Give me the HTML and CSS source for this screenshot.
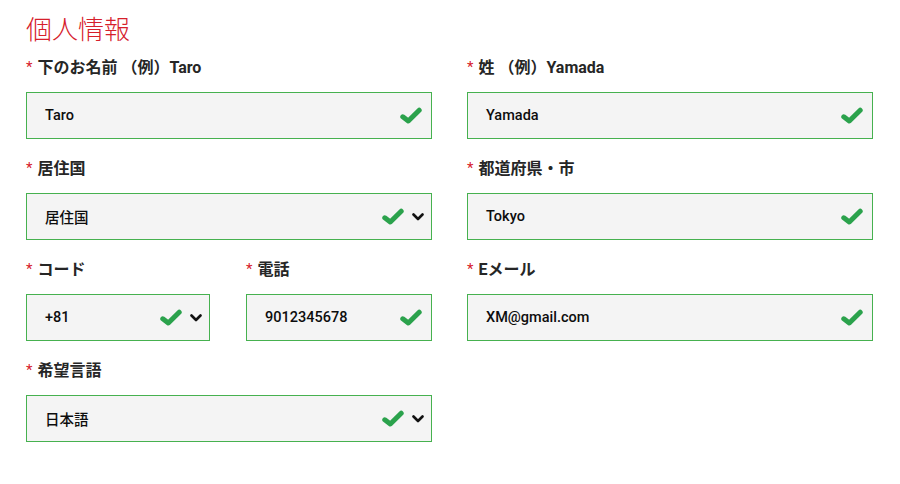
FILE: index.html
```html
<!DOCTYPE html>
<html lang="ja">
<head>
<meta charset="utf-8">
<title>個人情報</title>
<link rel="stylesheet" href="styles.css">
</head>
<body>
<div class="page">
  <h1 class="title">個人情報</h1>
  <div class="grid">
    <div class="group">
      <div class="label"><span class="req">*</span>下のお名前 （例）Taro</div>
      <div class="field"><span class="val">Taro</span>
        <svg class="check" viewBox="0 0 22 17"><path d="M2.8 9.8 L8.3 14 L19.2 3.2" fill="none" stroke="#2ba24c" stroke-width="5" stroke-linecap="round" stroke-linejoin="round"/></svg>
      </div>
    </div>
    <div class="group">
      <div class="label"><span class="req">*</span>姓 （例）Yamada</div>
      <div class="field"><span class="val">Yamada</span>
        <svg class="check" viewBox="0 0 22 17"><path d="M2.8 9.8 L8.3 14 L19.2 3.2" fill="none" stroke="#2ba24c" stroke-width="5" stroke-linecap="round" stroke-linejoin="round"/></svg>
      </div>
    </div>
    <div class="group">
      <div class="label"><span class="req">*</span>居住国</div>
      <div class="field select"><span class="val">居住国</span>
        <svg class="check" viewBox="0 0 22 17"><path d="M2.8 9.8 L8.3 14 L19.2 3.2" fill="none" stroke="#2ba24c" stroke-width="5" stroke-linecap="round" stroke-linejoin="round"/></svg>
        <svg class="chev" viewBox="0 0 12 8"><path d="M1.5 1.5 L6 6 L10.5 1.5" fill="none" stroke="#111" stroke-width="2.6" stroke-linecap="round" stroke-linejoin="round"/></svg>
      </div>
    </div>
    <div class="group">
      <div class="label"><span class="req">*</span>都道府県・市</div>
      <div class="field"><span class="val">Tokyo</span>
        <svg class="check" viewBox="0 0 22 17"><path d="M2.8 9.8 L8.3 14 L19.2 3.2" fill="none" stroke="#2ba24c" stroke-width="5" stroke-linecap="round" stroke-linejoin="round"/></svg>
      </div>
    </div>
    <div class="split">
      <div class="group">
        <div class="label"><span class="req">*</span>コード</div>
        <div class="field select"><span class="val">+81</span>
          <svg class="check" viewBox="0 0 22 17"><path d="M2.8 9.8 L8.3 14 L19.2 3.2" fill="none" stroke="#2ba24c" stroke-width="5" stroke-linecap="round" stroke-linejoin="round"/></svg>
          <svg class="chev" viewBox="0 0 12 8"><path d="M1.5 1.5 L6 6 L10.5 1.5" fill="none" stroke="#111" stroke-width="2.6" stroke-linecap="round" stroke-linejoin="round"/></svg>
        </div>
      </div>
      <div class="group">
        <div class="label"><span class="req">*</span>電話</div>
        <div class="field"><span class="val">9012345678</span>
          <svg class="check" viewBox="0 0 22 17"><path d="M2.8 9.8 L8.3 14 L19.2 3.2" fill="none" stroke="#2ba24c" stroke-width="5" stroke-linecap="round" stroke-linejoin="round"/></svg>
        </div>
      </div>
    </div>
    <div class="group">
      <div class="label"><span class="req">*</span>Eメール</div>
      <div class="field"><span class="val">XM@gmail.com</span>
        <svg class="check" viewBox="0 0 22 17"><path d="M2.8 9.8 L8.3 14 L19.2 3.2" fill="none" stroke="#2ba24c" stroke-width="5" stroke-linecap="round" stroke-linejoin="round"/></svg>
      </div>
    </div>
    <div class="group">
      <div class="label"><span class="req">*</span>希望言語</div>
      <div class="field select"><span class="val">日本語</span>
        <svg class="check" viewBox="0 0 22 17"><path d="M2.8 9.8 L8.3 14 L19.2 3.2" fill="none" stroke="#2ba24c" stroke-width="5" stroke-linecap="round" stroke-linejoin="round"/></svg>
        <svg class="chev" viewBox="0 0 12 8"><path d="M1.5 1.5 L6 6 L10.5 1.5" fill="none" stroke="#111" stroke-width="2.6" stroke-linecap="round" stroke-linejoin="round"/></svg>
      </div>
    </div>
  </div>
</div>
</body>
</html>
```
FILE: styles.css
```css
html, body {
  margin: 0;
  padding: 0;
  background: #ffffff;
}
body {
  font-family: Roboto, "Noto Sans CJK JP", sans-serif;
  color: #222;
}
.page {
  padding: 12px 0 0 26px;
}
.title {
  margin: 0 0 14px 0;
  font-family: "Noto Sans CJK JP", sans-serif;
  font-weight: 300;
  font-size: 26px;
  line-height: 32px;
  color: #d6202b;
}
.grid {
  display: grid;
  grid-template-columns: 406px 406px;
  column-gap: 35px;
}
.split {
  display: grid;
  grid-template-columns: 184px 186px;
  column-gap: 36px;
}
.group {
  margin-bottom: 20px;
}
.label {
  font-family: Roboto, "Noto Sans CJK JP", sans-serif;
  font-weight: 700;
  font-size: 16px;
  line-height: 20px;
  height: 20px;
  color: #262626;
  margin-bottom: 14px;
  white-space: nowrap;
}
.req {
  color: #d6202b;
  font-weight: 400;
  font-size: 15px;
  margin-right: 5px;
  position: relative;
  top: -1px;
}
.field {
  box-sizing: border-box;
  height: 47px;
  border: 1.5px solid #46b14f;
  background: #f4f4f4;
  display: flex;
  align-items: center;
  padding: 0 9px 0 18px;
}
.field.select {
  padding-right: 7px;
}
.val {
  flex: 1;
  font-family: Roboto, "Noto Sans CJK JP", sans-serif;
  font-weight: 500;
  font-size: 14.5px;
  color: #0d0d0d;
}
.check {
  width: 22px;
  height: 17px;
  flex: none;
}
.chev {
  width: 12px;
  height: 8px;
  flex: none;
  margin-left: 8px;
}
```
